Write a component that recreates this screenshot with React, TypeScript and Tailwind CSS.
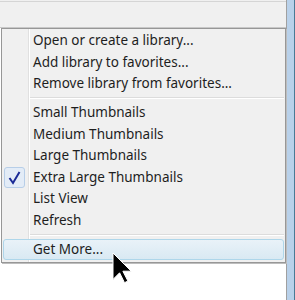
import React from "react";

const font = { fontFamily: '"Noto Sans", "Open Sans", sans-serif' };

function Item({ label, checked, hot }: { label: string; checked?: boolean; hot?: boolean }) {
  return (
    <div
      className={
        "flex items-center h-[21.5px] relative " +
        (hot
          ? "rounded-[3px] border border-[#aed6ea] bg-gradient-to-b from-[#e9f2f8] to-[#d9e9f3]"
          : "border border-transparent")
      }
    >
      <div className="w-[25px] h-full flex items-center shrink-0">
        {checked && (
          <div className="ml-0 w-[21px] h-[21px] rounded-[3px] border border-[#b7cee8] bg-[#e3ecf7] flex items-center justify-center">
            <svg width="15" height="15" viewBox="0 0 15 15">
              <path d="M2.5 8 L6 13 L12.5 2" fill="none" stroke="#1a2a96" strokeWidth="2" />
            </svg>
          </div>
        )}
      </div>
      <span className="pl-[4px] text-[13.5px] leading-[19px] text-[#1e1e1e] whitespace-nowrap">{label}</span>
    </div>
  );
}

function Sep() {
  return (
    <div className="h-[7.5px] flex flex-col justify-center pl-[27px]">
      <div className="h-[1px] bg-[#dcdcdc]" />
      <div className="h-[1px] bg-white" />
    </div>
  );
}

export default function App() {
  return (
    <div className="w-[295px] h-[300px] flex bg-white overflow-hidden relative" style={font}>
      <div className="w-[286px] flex flex-col">
        <div className="h-[28px] bg-[#f0f0f0] flex flex-col">
          <div className="h-[1px] bg-[#f0f0f0]" />
          <div className="h-[1px] bg-[#d5d5d5]" />
          <div className="flex-1" />
          <div className="h-[1px] bg-[#c8c8c8]" />
        </div>
        <div className="flex-1 bg-white">
          <div className="ml-[1px] w-[285px] border border-[#979797] shadow-[1px_1px_0_#bdbdbd] bg-[#f0f0f0] relative px-[1px] pt-[1px] pb-[2px]">
            <div className="absolute left-[26px] top-0 bottom-0 w-[1px] bg-[#e0e0e0]" />
            <div className="absolute left-[27px] top-0 bottom-0 w-[1px] bg-white" />
            <div className="relative">
              <Item label="Open or create a library..." />
              <Item label="Add library to favorites..." />
              <Item label="Remove library from favorites..." />
              <Sep />
              <Item label="Small Thumbnails" />
              <Item label="Medium Thumbnails" />
              <Item label="Large Thumbnails" />
              <Item label="Extra Large Thumbnails" checked />
              <Item label="List View" />
              <Item label="Refresh" />
              <Sep />
              <Item label="Get More..." hot />
            </div>
          </div>
        </div>
      </div>
      <div className="w-[1px] bg-[#a0a0a0]" />
      <div className="w-[7px] bg-[#b9d1ea]" />
      <div className="w-[1px] bg-[#4a7a96]" />
      <svg className="absolute left-[112px] top-[252px]" width="22" height="34" viewBox="0 0 22 34">
        <path
          d="M1 1 L1 27.4 L7.6 20.8 L12.5 30.7 L15.9 29 L10.9 19.2 L19.2 19.2 Z"
          fill="#000"
          stroke="#fff"
          strokeWidth="1"
          strokeLinejoin="miter"
        />
      </svg>
    </div>
  );
}
